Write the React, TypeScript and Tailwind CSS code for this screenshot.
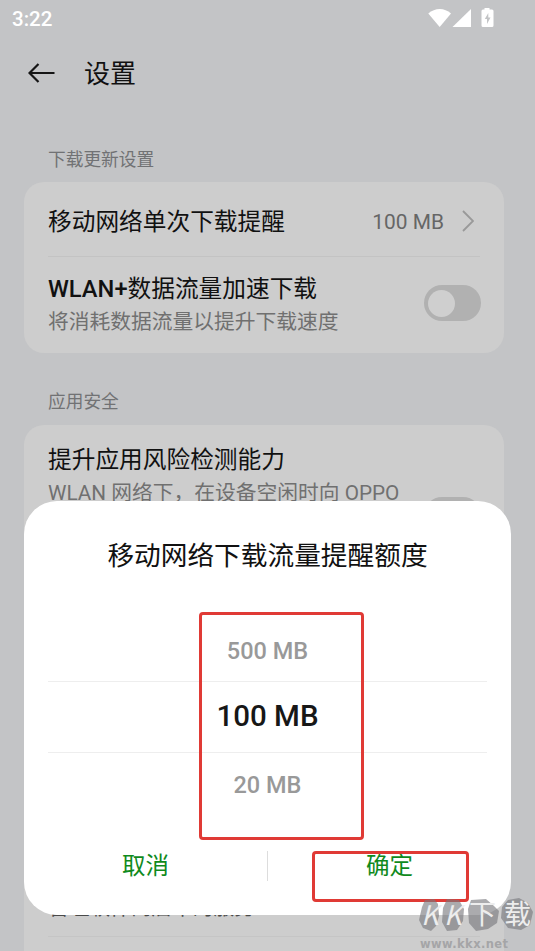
import React from 'react';

type ToggleRowProps = {
  title: React.ReactNode;
  description: string;
  tall?: boolean;
};

const amounts: { label: string; style: string }[] = [
  { label: '500 MB', style: 'h-[63px] pt-1 text-[23.5px] font-medium text-[#999999]' },
  { label: '100 MB', style: 'h-[72px] border-y border-[#eeeeee] pb-0.5 text-[29.5px] font-medium text-[#171717]' },
  { label: '20 MB', style: 'h-[66px] text-[23.5px] font-medium text-[#999999]' },
];

const StatusBar: React.FC = () => (
  <div className="flex h-[38px] items-center justify-between pr-10 pl-3 text-white">
    <span className="text-[20.5px] font-medium">3:22</span>
    <svg className="mb-1 h-5 w-[68px] translate-y-px" viewBox="0 0 68 20" fill="currentColor">
      <path d="M1.300 5.400C8-.6 17.500-.6 24 5.400L12.700 19Z" />
      <path d="M25.500 19 44 1v18Z" />
      <path
        fillRule="evenodd"
        d="M57.500 0h5v1.500h2.500q1.500 0 1.500 1.500v14.500q0 1.500-1.500 1.500h-9q-1.500 0-1.500-1.500V3q0-1.500 1.500-1.500h1.500ZM61.300 5l-3.500 6h2.200v5l3.500-6.400h-2.200Z"
      />
    </svg>
  </div>
);

const Switch: React.FC = () => (
  <div className="-mr-px flex h-9 w-[57px] shrink-0 items-center rounded-full bg-[#b1b1b1] pl-[4px]">
    <div className="size-[27px] rounded-full bg-[#cfcfcf]" />
  </div>
);

const ToggleRow: React.FC<ToggleRowProps> = ({ title, description, tall }) => (
  <div className="flex items-center justify-between">
    <div className={tall ? 'h-[146px]' : 'h-[64px]'}>
      <h3 className="text-[23.7px] leading-9 text-[#111111]">{title}</h3>
      <p className="w-[358px] text-[20.75px] leading-[31px] text-[#707070]">{description}</p>
    </div>
    <Switch />
  </div>
);

const LimitDialog: React.FC = () => (
  <div className="absolute top-[501px] left-6 flex h-[414px] w-[487px] flex-col rounded-[33px] bg-white px-6">
    <h2 className="pt-[35px] text-center text-[26.7px] leading-10 text-[#111111]">移动网络下载流量提醒额度</h2>
    <div className="mt-[42px]">
      {amounts.map((amount) => (
        <div key={amount.label} className={`flex items-center justify-center ${amount.style}`}>
          {amount.label}
        </div>
      ))}
    </div>
    <div className="mt-[30px] flex h-[34px] items-center text-[23.5px] text-[#0f8a1c]">
      <button className="w-[195px] pt-0.5 text-center">取消</button>
      <div className="mx-auto h-[30px] w-px bg-[#dddddd]" />
      <button className="w-[195px] pt-0.5 text-center">确定</button>
    </div>
  </div>
);

const Watermark: React.FC = () => (
  <svg className="absolute top-[894px] left-[415px] h-[57px] w-[120px]" viewBox="0 0 120 57">
    <g fill="#78787c" fillOpacity="0.62">
      <path d="m10 6 9-1 4 5 1 12-3 10-5 5-8-3-4-8 3-13Z" />
      <path d="m32 5 12 1 5 9-1 12-6 9-10 1-5-9 1-14Z" />
      <path d="m56 6 15-1 8 7 5 5-2 12-9 6-12 2-7-8-1-14Z" />
      <path d="m93 6 11-2 9 5 5 9-3 13-9 5-13-2-7-10 1-11Z" />
    </g>
    <g fill="#ededed" fontFamily="Noto Sans CJK SC, sans-serif" fontSize="27">
      <text x="6" y="31" fontStyle="italic">K</text>
      <text x="29" y="31" fontStyle="italic">K</text>
      <text x="54" y="30">下</text>
      <text x="89" y="30">载</text>
    </g>
    <text x="5" y="54" fill="#a5a5a7" fontFamily="DejaVu Sans, sans-serif" fontSize="11.500" fontWeight="700" textLength="88">
      www.kkx.net
    </text>
  </svg>
);

const App: React.FC = () => {
  return (
    <div className="relative h-[951px] w-[535px] overflow-hidden bg-[#c3c4c6] font-[Roboto,'Noto_Sans_CJK_SC',sans-serif]">
      <StatusBar />
      <header className="flex h-[70px] items-center gap-[28px] pl-7">
        <svg className="h-5 w-7" viewBox="0 0 28 20" fill="none" stroke="#151515" strokeWidth="2.2">
          <path d="M26.500 10H2M10.500 1 1.500 10l9 9" />
        </svg>
        <h1 className="pt-0.5 text-[26px] text-[#111111]">设置</h1>
      </header>

      <main className="px-6">
        <h2 className="mt-[37px] pl-6 text-[17.7px] leading-[30px] text-[#717274]">下载更新设置</h2>
        <section className="mt-[7px] h-[171px] w-[480px] rounded-[20px] bg-[#cdcdcd] px-6">
          <div className="flex h-[75px] items-center border-b border-[#c3c3c3]">
            <h3 className="grow pt-2 text-[23.7px] text-[#111111]">移动网络单次下载提醒</h3>
            <span className="pt-2 text-[20.9px] text-[#666666]">100 MB</span>
            <svg className="mt-1 mr-[6px] ml-[18px] h-[22px] w-3" viewBox="0 0 12 22" fill="none" stroke="#999999" strokeWidth="1.8">
              <path d="m1 1 10 10L1 21" />
            </svg>
          </div>
          <div className="pt-3.5">
            <ToggleRow
              title={<><span className="font-medium">WLAN+</span>数据流量加速下载</>}
              description="将消耗数据流量以提升下载速度"
            />
          </div>
        </section>

        <h2 className="mt-[34px] pl-6 text-[17.7px] leading-[30px] text-[#717274]">应用安全</h2>
        <section className="mt-[8px] h-[560px] w-[480px] rounded-[20px] bg-[#cdcdcd] px-6 pt-[17px]">
          <ToggleRow tall title="提升应用风险检测能力" description="WLAN 网络下，在设备空闲时向 OPPO" />
          <div className="mt-[297px] flex h-[52px] items-center border-b border-[#c5c5c5] pb-1 text-[20.7px] text-[#4a4a4a]">
            管理软件商店中的服务
          </div>
        </section>
      </main>

      <LimitDialog />
      {/* tap hints */}
      <div className="absolute top-[612px] left-[199px] h-[228px] w-[165px] rounded-[4px] border-3 border-[#e03a35]" />
      <div className="absolute top-[851px] left-[312px] h-[51px] w-[157px] rounded-[4px] border-3 border-[#e03a35]" />
      <Watermark />
    </div>
  );
};

export default App;
